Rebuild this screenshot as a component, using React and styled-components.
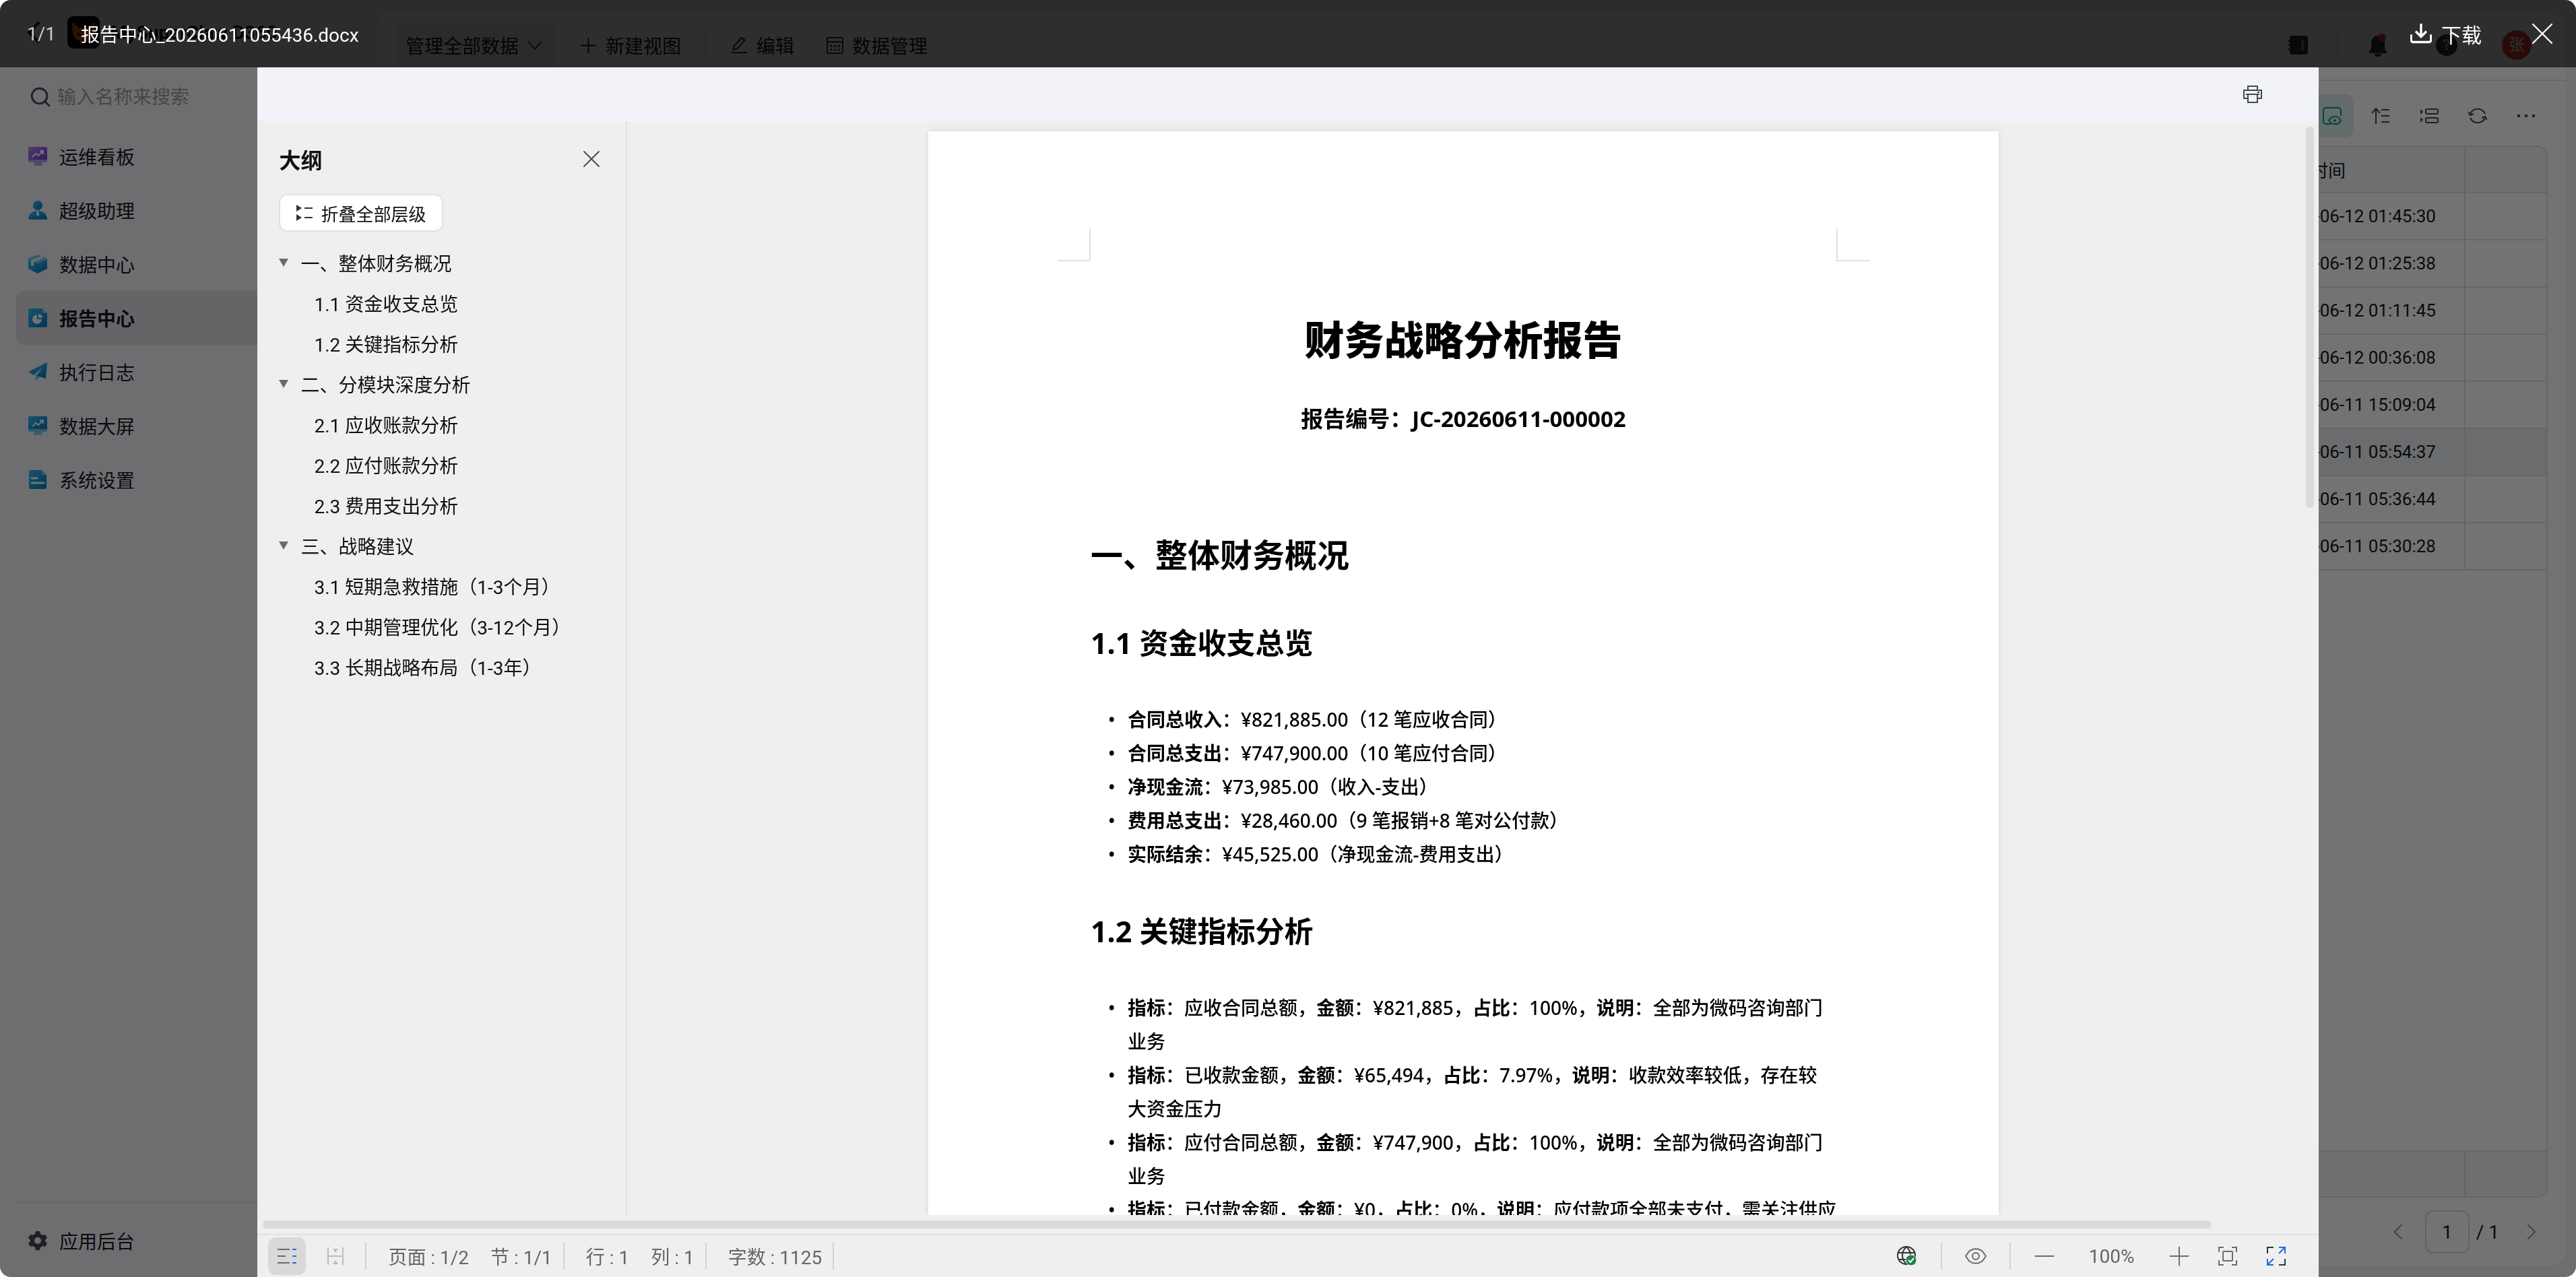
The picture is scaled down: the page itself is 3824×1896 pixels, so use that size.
import React, { useState } from 'react'
import styled, { createGlobalStyle } from 'styled-components'
import { ChevronLeft, ChevronRight, Minus, Plus, Search, X } from 'lucide-react'

const navItems = [
    { icon: 'board', label: '运维看板', tone: 'purple' },
    { icon: 'person', label: '超级助理' },
    { icon: 'box', label: '数据中心' },
    { icon: 'report', label: '报告中心' },
    { icon: 'plane', label: '执行日志' },
    { icon: 'board', label: '数据大屏' },
    { icon: 'file', label: '系统设置' },
]

const records = [
    '2026-06-12 01:45:30',
    '2026-06-12 01:25:38',
    '2026-06-12 01:11:45',
    '2026-06-12 00:36:08',
    '2026-06-11 15:09:04',
    '2026-06-11 05:54:37',
    '2026-06-11 05:36:44',
    '2026-06-11 05:30:28',
]

const outline = [
    { title: '一、整体财务概况', children: ['1.1 资金收支总览', '1.2 关键指标分析'] },
    { title: '二、分模块深度分析', children: ['2.1 应收账款分析', '2.2 应付账款分析', '2.3 费用支出分析'] },
    { title: '三、战略建议', children: ['3.1 短期急救措施（1-3个月）', '3.2 中期管理优化（3-12个月）', '3.3 长期战略布局（1-3年）'] },
]

const totals = [
    ['合同总收入', '¥821,885.00（12 笔应收合同）'],
    ['合同总支出', '¥747,900.00（10 笔应付合同）'],
    ['净现金流', '¥73,985.00（收入-支出）'],
    ['费用总支出', '¥28,460.00（9 笔报销+8 笔对公付款）'],
    ['实际结余', '¥45,525.00（净现金流-费用支出）'],
]

const metrics = [
    ['应收合同总额', '¥821,885', '100%', '全部为微码咨询部门\n业务'],
    ['已收款金额', '¥65,494', '7.97%', '收款效率较低，存在较\n大资金压力'],
    ['应付合同总额', '¥747,900', '100%', '全部为微码咨询部门\n业务'],
    ['已付款金额', '¥0', '0%', '应付款项全部未支付，需关注供应'],
]

const NavIcon = ({ name, tone }) => {
    const id = `${name}-${tone || 'blue'}`
    const [from, to, pale] = tone === 'purple' ? ['#b18bfa', '#6936c8', '#b79bf0'] : ['#33bdfa', '#0277b5', '#7cc8ea']
    const fill = `url(#${id})`
    return (
        <svg width="28" height="28" viewBox="0 0 28 28" aria-hidden="true">
            <defs>
                <linearGradient id={id} x1="0" y1="0" x2="1" y2="1">
                    <stop offset="0" stopColor={from} />
                    <stop offset="1" stopColor={to} />
                </linearGradient>
            </defs>
            {name === 'board' && (
                <>
                    <path d="M0 15h28v6a2 2 0 0 1-2 2h-6l1 5H8l1-5H2a2 2 0 0 1-2-2z" fill={pale} />
                    <path d="M2 0h24a2 2 0 0 1 2 2v17H0V2a2 2 0 0 1 2-2z" fill={fill} />
                    <path d="M6 15l5-5 4 3 6-6M17 6h5v5" fill="none" stroke="#fff" strokeWidth="2" />
                </>
            )}
            {name === 'person' && (
                <>
                    <circle cx="14" cy="7" r="7" fill={fill} />
                    <path d="M0 28c0-8 6-13 14-13s14 5 14 13z" fill={fill} />
                    <path d="M13 15h2l1 6-2 2-2-2z" fill="#fff" />
                </>
            )}
            {name === 'box' && (
                <>
                    <path d="M14 0l14 5v4l-14 7L0 9V5z" fill={pale} />
                    <path d="M0 7l14 6 14-6v14l-14 7-14-7z" fill={fill} />
                    <path d="M4 17V9L20 2l4 2-16 7v6z" fill="#fff" opacity=".85" />
                </>
            )}
            {name === 'report' && (
                <>
                    <path d="M2 0h19l7 7v19a2 2 0 0 1-2 2H2a2 2 0 0 1-2-2V2a2 2 0 0 1 2-2z" fill={fill} />
                    <path d="M21 0l7 7h-7z" fill={pale} />
                    <path d="M13 9a7 7 0 1 0 7 7h-7z" fill="#fff" />
                    <path d="M15 8a6 6 0 0 1 6 6h-6z" fill="#fff" />
                </>
            )}
            {name === 'plane' && (
                <>
                    <path d="M11 18v10l6-7z" fill={pale} />
                    <path d="M28 0L0 14l8 5L21 8l-9 12 14 4z" fill={fill} />
                </>
            )}
            {name === 'file' && (
                <>
                    <path d="M3 0h17l7 7v19a2 2 0 0 1-2 2H3a2 2 0 0 1-2-2V2a2 2 0 0 1 2-2z" fill={fill} />
                    <path d="M20 0l7 7h-7z" fill={pale} />
                    <path d="M5 12h8M5 19h18" stroke="#fff" strokeWidth="3" strokeLinecap="round" />
                </>
            )}
        </svg>
    )
}

const Line = ({ size = 28, width = 2, children, ...rest }) => (
    <svg width={size} height={size} viewBox="0 0 28 28" fill="none" stroke="currentColor" strokeWidth={width} aria-hidden="true" {...rest}>
        {children}
    </svg>
)

const Sidebar = () => (
    <Side>
        <Brand>
            <svg width="20" height="34" viewBox="0 0 20 34" fill="none" stroke="currentColor" strokeWidth="4" aria-hidden="true">
                <path d="M18 2L3 17l15 15" />
            </svg>
            <svg width="48" height="48" viewBox="0 0 48 48" aria-hidden="true">
                <rect width="48" height="48" rx="9" />
                <path d="M8 9l10 9h12l10-9c2 9 1 20-5 25l-11 6-11-6C7 29 6 18 8 9z" fill="#e8641b" />
                <path d="M14 24l6 3-4 3zM34 24l-6 3 4 3z" />
            </svg>
            <span>MySuperClaw D360</span>
        </Brand>
        <SearchBox>
            <Search size={34} strokeWidth={2} />
            <input placeholder="输入名称来搜索" aria-label="输入名称来搜索" />
        </SearchBox>
        <Nav>
            {navItems.map((item) => (
                <NavLink key={item.label} href="#" $active={item.icon === 'report'}>
                    <NavIcon name={item.icon} tone={item.tone} />
                    {item.label}
                </NavLink>
            ))}
        </Nav>
        <SideFooter>
            <NavLink href="#">
                <svg width="28" height="28" viewBox="0 0 28 28" fill="#43474f" aria-hidden="true">
                    <path fillRule="evenodd" d="M11 0h6l1 4 3 2 4-1 3 5-3 3v2l3 3-3 5-4-1-3 2-1 4h-6l-1-4-3-2-4 1-3-5 3-3v-2l-3-3 3-5 4 1 3-2zM14 9a5 5 0 1 0 0 10 5 5 0 0 0 0-10z" />
                </svg>
                应用后台
            </NavLink>
        </SideFooter>
    </Side>
)

const TopBar = () => (
    <Top>
        <ViewTab>
            管理全部数据
            <Line size={22}><path d="M1 7l13 14L27 7" /></Line>
        </ViewTab>
        <TopButton>
            <Line size={25}><path d="M14 1v26M1 14h26" /></Line>
            新建视图
        </TopButton>
        <TopRule />
        <TopButton>
            <Line size={25}><path d="M4 21l2-7L18 1l5 4-12 14zM1 26h26" /></Line>
            编辑
        </TopButton>
        <TopButton>
            <Line size={25}>
                <rect x="1" y="1" width="26" height="26" rx="2" />
                <path d="M1 8h26" />
                <path d="M6 15h3M12.500 15h3M19 15h3M6 21h3M12.500 21h3M19 21h3" strokeWidth="3" />
            </Line>
            数据管理
        </TopButton>
        <TopRight>
            <svg width="30" height="30" viewBox="0 0 30 30" aria-hidden="true">
                <path d="M6 1h21a3 3 0 0 1 3 3v22a3 3 0 0 1-3 3H6a3 3 0 0 1-3-3v-4H0v-2h3v-4H0v-2h3v-4H0V8h3V4a3 3 0 0 1 3-3z" fill="#33363d" />
                <path d="M22 7v16" stroke="#999" strokeWidth="3" />
            </svg>
            <TopRule />
            <svg width="30" height="34" viewBox="0 0 30 34" aria-hidden="true">
                <path d="M14 3c7 0 10 6 10 11v8l3 5v2H1v-2l3-5v-8C4 9 7 3 14 3zM9 30h10c0 3-2 4-5 4s-5-1-5-4z" fill="#33363d" />
                <circle cx="20" cy="6" r="6" fill="#e53935" />
            </svg>
            <Help>?</Help>
            <Avatar>张</Avatar>
        </TopRight>
    </Top>
)

const DataPanel = () => (
    <Panel>
        <TopBar />
        <Tools>
            <ToolButton $active aria-label="预览">
                <Line><path d="M13 26H5a4 4 0 0 1-4-4V6a4 4 0 0 1 4-4h18a4 4 0 0 1 4 4v8" /><path d="M9 21c5-8 14-8 18 0-4 7-13 7-18 0z" /><circle cx="18" cy="21" r="1" /></Line>
            </ToolButton>
            <ToolButton aria-label="排序">
                <Line><path d="M7 26V3M1 10l6-7 6 7M15 5h12M15 14h12M15 23h12" /></Line>
            </ToolButton>
            <ToolButton aria-label="分组">
                <Line>
                    <rect x="9" y="4" width="18" height="7" rx="2" /><rect x="9" y="17" width="18" height="7" rx="2" />
                    <path d="M1 4l4 4-4 4zM1 16l4 4-4 4z" fill="currentColor" stroke="none" />
                </Line>
            </ToolButton>
            <ToolButton aria-label="刷新">
                <Line><path d="M3 11a12 12 0 0 1 22 0M25 17a12 12 0 0 1-22 0M0 8l3 5 5-2M28 20l-3-5-5 2" /></Line>
            </ToolButton>
            <ToolButton aria-label="更多">
                <Line><path d="M1 14h4M12 14h4M23 14h4" strokeWidth="4" /></Line>
            </ToolButton>
        </Tools>
        <TableFrame>
            <Table>
                <thead>
                    <tr>
                        <th />
                        <DateHead>创建时间</DateHead>
                        <EndHead />
                    </tr>
                </thead>
                <tbody>
                    {records.map((time) => (
                        <Record key={time} $current={time.endsWith('05:54:37')}>
                            <td />
                            <td>{time}</td>
                            <td />
                        </Record>
                    ))}
                </tbody>
            </Table>
            <Summary><span /></Summary>
        </TableFrame>
        <Pager>
            <PagerButton aria-label="上一页"><ChevronLeft size={42} strokeWidth={1} /></PagerButton>
            <PageInput defaultValue="1" aria-label="页码" />
            <PageCount>/ 1</PageCount>
            <PagerButton aria-label="下一页"><ChevronRight size={42} strokeWidth={1} /></PagerButton>
        </Pager>
    </Panel>
)

const OutlinePanel = ({ onClose }) => {
    const [folded, setFolded] = useState(false)

    return (
        <Outline>
            <OutlineHead>
                <OutlineTitle>大纲</OutlineTitle>
                <PlainButton onClick={onClose} aria-label="关闭大纲"><X size={44} strokeWidth={1} /></PlainButton>
            </OutlineHead>
            <FoldButton onClick={() => setFolded(!folded)}>
                <svg width="24" height="24" viewBox="0 0 24 24" fill="#333" aria-hidden="true">
                    <path d="M0 0l8 5-8 5zM0 14l8 5-8 5zM12 4h12v2H12zM12 18h12v2H12z" />
                </svg>
                折叠全部层级
            </FoldButton>
            <Tree>
                {outline.map((chapter) => (
                    <li key={chapter.title}>
                        <TreeRow>
                            <svg width="14" height="12" viewBox="0 0 14 12" fill="#6b6b6b" aria-hidden="true"><path d="M0 0h14L7 12z" /></svg>
                            {chapter.title}
                        </TreeRow>
                        {!folded && chapter.children.map((title) => <TreeRow key={title} $nested>{title}</TreeRow>)}
                    </li>
                ))}
            </Tree>
        </Outline>
    )
}

const Paper = () => (
    <Sheet>
        <Marks><Mark $side="right" /><Mark $side="left" /></Marks>
        <Body>
            <Title>财务战略分析报告</Title>
            <Serial>报告编号：JC-20260611-000002</Serial>
            <Chapter>一、整体财务概况</Chapter>
            <Section>1.1 资金收支总览</Section>
            <Bullets>
                {totals.map(([name, text]) => <li key={name}><b>{name}</b>：{text}</li>)}
            </Bullets>
            <Section>1.2 关键指标分析</Section>
            <Bullets>
                {metrics.map(([name, amount, share, note]) => (
                    <li key={name}>
                        <b>指标</b>：{name}，<b>金额</b>：{amount}，<b>占比</b>：{share}，<b>说明</b>：{note}
                    </li>
                ))}
            </Bullets>
        </Body>
    </Sheet>
)

const StatusBar = ({ onToggleOutline }) => (
    <Status>
        <StatusButton $active onClick={onToggleOutline} aria-label="大纲">
            <svg width="28" height="24" viewBox="0 0 28 24" aria-hidden="true">
                <path d="M0 2h18M0 12h12M0 22h18" stroke="#6b6b6b" strokeWidth="2" />
                <path d="M22 2h6M22 12h6M22 22h6" stroke="#1f6be0" strokeWidth="2" />
            </svg>
        </StatusButton>
        <StatusButton disabled aria-label="页间距">
            <svg width="24" height="28" viewBox="0 0 24 28" fill="#bdbdbd" aria-hidden="true">
                <path d="M0 1h2v12h20V1h2v26h-2V15H2v12H0zM8 3h8l-4 6zM12 20l4 6H8z" />
            </svg>
        </StatusButton>
        <StatusRule />
        <StatusGroup><span>页面 : 1/2</span><span>节 : 1/1</span></StatusGroup>
        <StatusRule />
        <StatusGroup><span>行 : 1</span><span>列 : 1</span></StatusGroup>
        <StatusRule />
        <StatusGroup><span>字数 : 1125</span></StatusGroup>
        <StatusRule />
        <StatusRight>
            <StatusButton aria-label="网络状态">
                <svg width="30" height="30" viewBox="0 0 30 30" fill="none" stroke="#333" strokeWidth="2" aria-hidden="true">
                    <circle cx="14" cy="14" r="13" />
                    <path d="M1 10h26M2 20h14M14 1c-8 8-8 18 0 26M14 1c4 4 6 8 6 12" />
                    <circle cx="21" cy="21" r="8" fill="#1e8449" stroke="#efefef" strokeWidth="1" />
                    <path d="M17 21l3 3 5-6" stroke="#fff" />
                </svg>
            </StatusButton>
            <StatusRule />
            <StatusButton aria-label="护眼模式">
                <svg width="32" height="24" viewBox="0 0 32 24" fill="none" stroke="currentColor" strokeWidth="2" aria-hidden="true">
                    <path d="M1 12l5-7c6-5 14-5 20 0l5 7-5 7c-6 5-14 5-20 0z" />
                    <circle cx="16" cy="12" r="5" />
                </svg>
            </StatusButton>
            <StatusRule />
            <StatusButton aria-label="缩小"><Minus size={46} strokeWidth={1} /></StatusButton>
            <Zoom>100%</Zoom>
            <StatusButton aria-label="放大"><Plus size={46} strokeWidth={1} /></StatusButton>
            <StatusButton aria-label="适合页面">
                <Line><path d="M1 8V1h7M20 1h7v7M27 20v7h-7M8 27H1v-7" /><rect x="7" y="7" width="14" height="14" rx="1" /></Line>
            </StatusButton>
            <StatusButton aria-label="全屏">
                <Line><path d="M1 10V1h9M27 18v9h-9" stroke="#333" /><path d="M18 1h9v9M27 1l-9 9M1 18v9h9M1 27l9-9" stroke="#1f6be0" /></Line>
            </StatusButton>
        </StatusRight>
    </Status>
)

const App = () => {
    const [showOutline, setShowOutline] = useState(true)

    return (
        <Shell>
            <GlobalStyle />
            <Sidebar />
            <DataPanel />
            <Overlay>
                <PreviewBar>
                    <Count>1/1</Count>
                    <FileName>报告中心_20260611055436.docx</FileName>
                    <DownloadButton>
                        <Line size={32} width={3}><path d="M14 1v16M7 11l7 7 7-7M1 15v7a3 3 0 0 0 3 3h20a3 3 0 0 0 3-3v-7" /></Line>
                        下载
                    </DownloadButton>
                    <PlainButton aria-label="关闭"><X size={56} strokeWidth={1} color="#fff" /></PlainButton>
                </PreviewBar>
                <Viewer>
                    <ViewerTools>
                        <PlainButton aria-label="打印">
                            <Line><path d="M7 8V2h14v6M7 20H1V8h26v12h-6M4 14h20M21 11h3" /><path d="M7 14h14v12H7z" /></Line>
                        </PlainButton>
                    </ViewerTools>
                    <Workspace>
                        {showOutline && <OutlinePanel onClose={() => setShowOutline(false)} />}
                        <Canvas><Paper /></Canvas>
                        <VerticalTrack><VerticalThumb /></VerticalTrack>
                    </Workspace>
                    <HorizontalTrack><HorizontalThumb /></HorizontalTrack>
                    <StatusBar onToggleOutline={() => setShowOutline(!showOutline)} />
                </Viewer>
            </Overlay>
        </Shell>
    )
}

export default App

const GlobalStyle = createGlobalStyle`
    * {
        box-sizing: border-box;
    }

    body {
        margin: 0;
        background-color: #fff;
        font-family: Roboto, "Noto Sans CJK SC", sans-serif;
        font-size: 28px;
        color: #15171c;
    }

    button, input {
        font: inherit;
        color: inherit;
    }

    svg {
        flex: none;
    }
`

const Shell = styled.div`
    display: flex;
    height: 100vh;
    overflow: hidden;
    border-radius: 16px;
    background-color: #f4f4f8;
`

const PlainButton = styled.button`
    display: flex;
    align-items: center;
    justify-content: center;
    padding: 0;
    border: none;
    background: none;
    color: #43474f;
    cursor: pointer;
`

/* sidebar */

const Side = styled.aside`
    display: flex;
    flex-direction: column;
    width: 560px;
    flex: none;
`

const Brand = styled.div`
    display: flex;
    align-items: center;
    gap: 16px;
    height: 96px;
    padding-left: 40px;
    font-weight: 700;

    svg + svg {
        margin-left: 24px;
    }
`

const SearchBox = styled.label`
    display: flex;
    align-items: center;
    gap: 6px;
    height: 96px;
    padding-left: 43px;
    color: #43474f;

    input {
        border: none;
        outline: none;
        background: none;
    }

    input::placeholder {
        color: #9a9ba1;
    }
`

const Nav = styled.nav`
    flex: 1;
    padding-left: 24px;
`

const NavLink = styled.a`
    display: flex;
    align-items: center;
    gap: 18px;
    height: 80px;
    padding-left: 18px;
    border-radius: 12px;
    background-color: ${({ $active }) => ($active ? '#e1e1e4' : 'transparent')};
    color: #151a26;
    font-weight: ${({ $active }) => ($active ? 700 : 400)};
    text-decoration: none;
`

const SideFooter = styled.div`
    height: 112px;
    margin-left: 24px;
    padding-top: 16px;
    border-top: 2px solid #e6e6ea;
`

/* data panel */

const Panel = styled.main`
    display: flex;
    flex: 1;
    flex-direction: column;
    min-width: 0;
    margin: 16px 16px 16px 0;
    border-radius: 24px;
    background-color: #fff;
`

const Top = styled.header`
    display: flex;
    align-items: center;
    gap: 24px;
    height: 104px;
    padding: 0 50px 0 26px;
    border-bottom: 2px solid #e6e6ea;
`

const TopButton = styled.button`
    display: flex;
    align-items: center;
    gap: 13px;
    height: 64px;
    padding: 0 12px;
    border: none;
    border-radius: 12px;
    background: none;
    cursor: pointer;
`

const ViewTab = styled(TopButton)`
    padding: 0 20px 0 16px;
    background-color: #e6f4f1;
`

const TopRule = styled.span`
    width: 2px;
    height: 40px;
    background-color: #e0e0e4;
`

const TopRight = styled.div`
    display: flex;
    align-items: center;
    gap: 44px;
    margin-left: auto;
`

const Help = styled.span`
    width: 32px;
    margin: 0 22px 0 26px;
    border-radius: 50%;
    background-color: #33363d;
    color: #aaa;
    font-size: 24px;
    font-weight: 700;
    line-height: 32px;
    text-align: center;
`

const Avatar = styled.span`
    width: 44px;
    border-radius: 50%;
    background-color: #e53935;
    color: #fff;
    font-size: 24px;
    line-height: 44px;
    text-align: center;
`

const Tools = styled.div`
    display: flex;
    align-items: center;
    justify-content: flex-end;
    gap: 8px;
    height: 96px;
    padding: 8px 26px 0 0;
`

const ToolButton = styled(PlainButton)`
    width: 64px;
    height: 64px;
    border-radius: 12px;
    background-color: ${({ $active }) => ($active ? '#dcefee' : 'transparent')};
    color: ${({ $active }) => ($active ? '#009688' : '#43474f')};
`

const TableFrame = styled.div`
    display: flex;
    flex: 1;
    flex-direction: column;
    justify-content: space-between;
    margin: 0 26px;
    overflow: hidden;
    border: 2px solid #e0e1e5;
    border-radius: 16px;
`

const Table = styled.table`
    width: 100%;
    table-layout: fixed;
    border-collapse: collapse;
    font-size: 26px;

    th, td {
        padding: 0 22px;
        border-right: 2px solid #e0e1e5;
        border-bottom: 2px solid #e0e1e5;
        text-align: left;
    }

    th {
        height: 68px;
        background-color: #f3f5f9;
        font-weight: 400;
    }

    td {
        height: 70px;
    }

    th:last-child, td:last-child {
        border-right: none;
    }
`

const DateHead = styled.th`
    width: 304px;
`

const EndHead = styled.th`
    width: 121px;
`

const Record = styled.tr`
    background-color: ${({ $current }) => ($current ? '#ebeff4' : 'transparent')};
`

const Summary = styled.div`
    display: flex;
    justify-content: flex-end;
    height: 68px;
    border-top: 2px solid #e0e1e5;
    background-color: #f3f5f9;

    span {
        width: 122px;
        border-left: 2px solid #e0e1e5;
    }
`

const Pager = styled.div`
    display: flex;
    align-items: center;
    justify-content: flex-end;
    gap: 10px;
    height: 102px;
    padding-right: 20px;
`

const PagerButton = styled(PlainButton)`
    width: 60px;
    height: 64px;
    color: #7a7d84;
`

const PageInput = styled.input`
    width: 66px;
    height: 64px;
    border: 2px solid #d8d9dd;
    border-radius: 12px;
    background: none;
    text-align: center;
`

const PageCount = styled.span`
    margin-right: 8px;
`

/* preview */

const Overlay = styled.div`
    position: fixed;
    inset: 0;
    display: flex;
    flex-direction: column;
    border-radius: 16px;
    overflow: hidden;
    background-color: rgba(0, 0, 0, 0.55);
`

const PreviewBar = styled.div`
    display: flex;
    align-items: center;
    height: 100px;
    padding: 0 22px 0 40px;
    background-color: rgba(0, 0, 0, 0.6);
    color: #fff;
`

const Count = styled.span`
    width: 80px;
    color: #c8c8c8;
`

const FileName = styled.span`
    flex: 1;
`

const DownloadButton = styled.button`
    display: flex;
    align-items: center;
    gap: 14px;
    margin-right: 62px;
    padding: 0;
    border: none;
    background: none;
    color: #fff;
    font-size: 30px;
    cursor: pointer;
`

const Viewer = styled.section`
    display: flex;
    flex: 1;
    flex-direction: column;
    width: 80%;
    min-height: 0;
    margin: 0 auto;
    background-color: #efefef;
`

const ViewerTools = styled.div`
    display: flex;
    justify-content: flex-end;
    height: 80px;
    padding-right: 84px;
    background-color: #f2f3f8;
`

const Workspace = styled.div`
    display: flex;
    flex: 1;
    min-height: 0;
`

const Outline = styled.aside`
    width: 549px;
    flex: none;
    padding: 32px 29px 32px 32px;
    border-right: 2px solid #e1e1e1;
    color: #111;
`

const OutlineHead = styled.div`
    display: flex;
    align-items: center;
    justify-content: space-between;
    height: 48px;
    margin-bottom: 28px;
`

const OutlineTitle = styled.h2`
    margin: 0;
    font-size: 32px;
`

const FoldButton = styled.button`
    display: flex;
    align-items: center;
    gap: 12px;
    height: 56px;
    padding: 0 24px;
    border: 2px solid #e1e1e1;
    border-radius: 12px;
    background-color: #fff;
    font-size: 26px;
    cursor: pointer;
`

const Tree = styled.ul`
    margin: 16px 0 0;
    padding: 0;
    list-style: none;
`

const TreeRow = styled.div`
    display: flex;
    align-items: center;
    gap: 18px;
    height: 60px;
    padding-left: ${({ $nested }) => ($nested ? 52 : 0)}px;
`

const Canvas = styled.div`
    display: flex;
    flex: 1;
    justify-content: center;
    overflow: hidden;
    padding-top: 15px;
`

const Sheet = styled.article`
    width: 1589px;
    flex: none;
    padding-top: 144px;
    background-color: #fff;
    box-shadow: 0 0 8px rgba(0, 0, 0, 0.1);
    color: #000;
    font-family: "Noto Sans", "Noto Sans CJK SC", sans-serif;
`

const Marks = styled.div`
    display: flex;
    justify-content: space-between;
    padding: 0 192px;
`

const Mark = styled.span`
    width: 49px;
    height: 49px;
    border-bottom: 2px solid #e1e1e1;
    border-${({ $side }) => $side}: 2px solid #e1e1e1;
`

const Body = styled.div`
    padding: 76px 241px 0;
`

const Title = styled.h1`
    margin: 0;
    font-size: 59px;
    font-weight: 900;
    line-height: 80px;
    text-align: center;
`

const Serial = styled.p`
    margin: 54px 0 0;
    font-size: 33px;
    font-weight: 700;
    line-height: 48px;
    text-align: center;
`

const Chapter = styled.h2`
    margin: 146px 0 69px;
    font-size: 48px;
    line-height: 64px;
`

const Section = styled.h3`
    margin: 60px 0 58px;
    font-size: 43px;
    line-height: 60px;
`

const Bullets = styled.ul`
    margin: 0 -8px 0 0;
    padding: 0 0 0 55px;
    font-weight: 500;
    line-height: 50px;
    list-style: none;
    white-space: pre-line;

    li::before {
        content: "•";
        float: left;
        width: 29px;
        margin-left: -29px;
    }

    b {
        font-weight: 700;
    }
`

const VerticalTrack = styled.div`
    width: 28px;
    padding: 8px 7px 0 9px;
`

const VerticalThumb = styled.div`
    height: 35%;
    border-radius: 6px;
    background-color: #dadada;
`

const HorizontalTrack = styled.div`
    padding: 8px 159px 8px 8px;
`

const HorizontalThumb = styled.div`
    height: 12px;
    border-radius: 6px;
    background-color: #dadada;
`

const Status = styled.footer`
    display: flex;
    align-items: center;
    gap: 16px;
    height: 64px;
    padding: 0 35px 0 16px;
    border-top: 2px solid #e1e1e1;
    color: #666;
`

const StatusButton = styled.button`
    display: flex;
    align-items: center;
    justify-content: center;
    width: 56px;
    height: 56px;
    padding: 0;
    border: none;
    border-radius: 12px;
    background-color: ${({ $active }) => ($active ? '#d9d9d9' : 'transparent')};
    color: #6b6b6b;
    cursor: pointer;
`

const StatusRule = styled.span`
    width: 2px;
    height: 40px;
    background-color: #d2d2d2;
`

const StatusGroup = styled.div`
    display: flex;
    gap: 32px;
    padding-left: 16px;
`

const StatusRight = styled.div`
    display: flex;
    align-items: center;
    gap: 16px;
    margin-left: auto;

    ${StatusRule} {
        margin: 0 6px;
    }
`

const Zoom = styled.span`
    width: 112px;
    text-align: center;
`
